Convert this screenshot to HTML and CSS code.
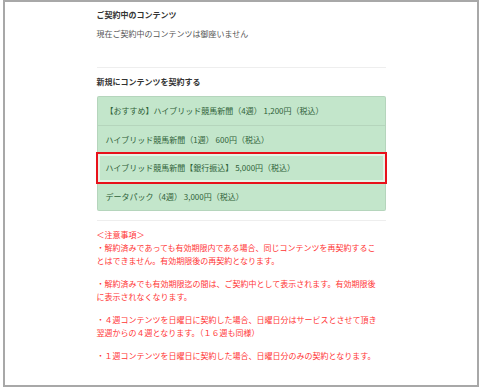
FILE: index.html
```html
<!DOCTYPE html>
<html lang="ja">
<head>
  <meta charset="UTF-8">
  <meta name="viewport" content="width=device-width, initial-scale=1.0">
  <title>コンテンツ契約</title>
  <link rel="stylesheet" href="styles.css">
</head>
<body>
  <div class="frame">
    <div class="content">
      <h4 class="section-title">ご契約中のコンテンツ</h4>
      <p class="empty-text">現在ご契約中のコンテンツは御座いません</p>

      <hr class="divider divider-top">

      <h4 class="section-title section-title-new">新規にコンテンツを契約する</h4>

      <!-- 契約可能なコンテンツ一覧 -->
      <ul class="plan-list">
        <li class="plan-item">【おすすめ】ハイブリッド競馬新聞（4週） 1,200円（税込）</li>
        <li class="plan-item">ハイブリッド競馬新聞（1週） 600円（税込）</li>
        <li class="plan-item plan-item-selected">ハイブリッド競馬新聞【銀行振込】 5,000円（税込）</li>
        <li class="plan-item">データパック（4週） 3,000円（税込）</li>
      </ul>

      <hr class="divider divider-bottom">

      <div class="notes">
        <p>＜注意事項＞<br>・解約済みであっても有効期限内である場合、同じコンテンツを再契約することはできません。有効期限後の再契約となります。</p>
        <p>・解約済みでも有効期限迄の間は、ご契約中として表示されます。有効期限後に表示されなくなります。</p>
        <p>・４週コンテンツを日曜日に契約した場合、日曜日分はサービスとさせて頂き翌週からの４週となります。（１６週も同様）</p>
        <p>・１週コンテンツを日曜日に契約した場合、日曜日分のみの契約となります。</p>
      </div>
    </div>
  </div>
</body>
</html>
```

FILE: styles.css
```css
body {
  margin: 0;
  background-color: #fff;
  font-family: "Noto Sans CJK JP", "Noto Sans", sans-serif;
  font-size: 8px;
  line-height: 13px;
  color: #555;
}
.frame {
  box-sizing: border-box;
  width: 476px;
  height: 387px;
  margin-left: 3px;
  border: 2px solid #a8a8a8;
  overflow: hidden;
}
.content {
  width: 289px;
  margin: 0 auto;
}
.section-title {
  margin: 6px 0 0;
  font-size: 8px;
  font-weight: bold;
  color: #333;
}
.section-title-new {
  margin-top: 7px;
}
.empty-text {
  margin: 6px 0 0;
}
.divider {
  margin: 0;
  border: none;
  border-top: 1px solid #eee;
}
.divider-top {
  margin-top: 27px;
}
.divider-bottom {
  margin-top: 9px;
}
.plan-list {
  list-style: none;
  margin: 8px 0 0;
  padding: 0;
}
.plan-item {
  padding: 7px 8px;
  line-height: 13.5px;
  background-color: #c3e6cb;
  color: #2f6239;
  border: 1px solid rgba(0, 0, 0, 0.07);
  margin-top: -1px;
}
.plan-item:first-child {
  margin-top: 0;
  border-radius: 2px 2px 0 0;
}
.plan-item:last-child {
  border-radius: 0 0 2px 2px;
}
.plan-item-selected {
  outline: 2.5px solid #e8121b;
  outline-offset: -1px;
  box-shadow: inset 0 0 0 2px rgba(255, 255, 255, 0.55);
}
.notes {
  max-width: 284px;
  margin-top: 7px;
  color: #ff3535;
}
.notes p {
  margin: 0 0 10px;
}
```
